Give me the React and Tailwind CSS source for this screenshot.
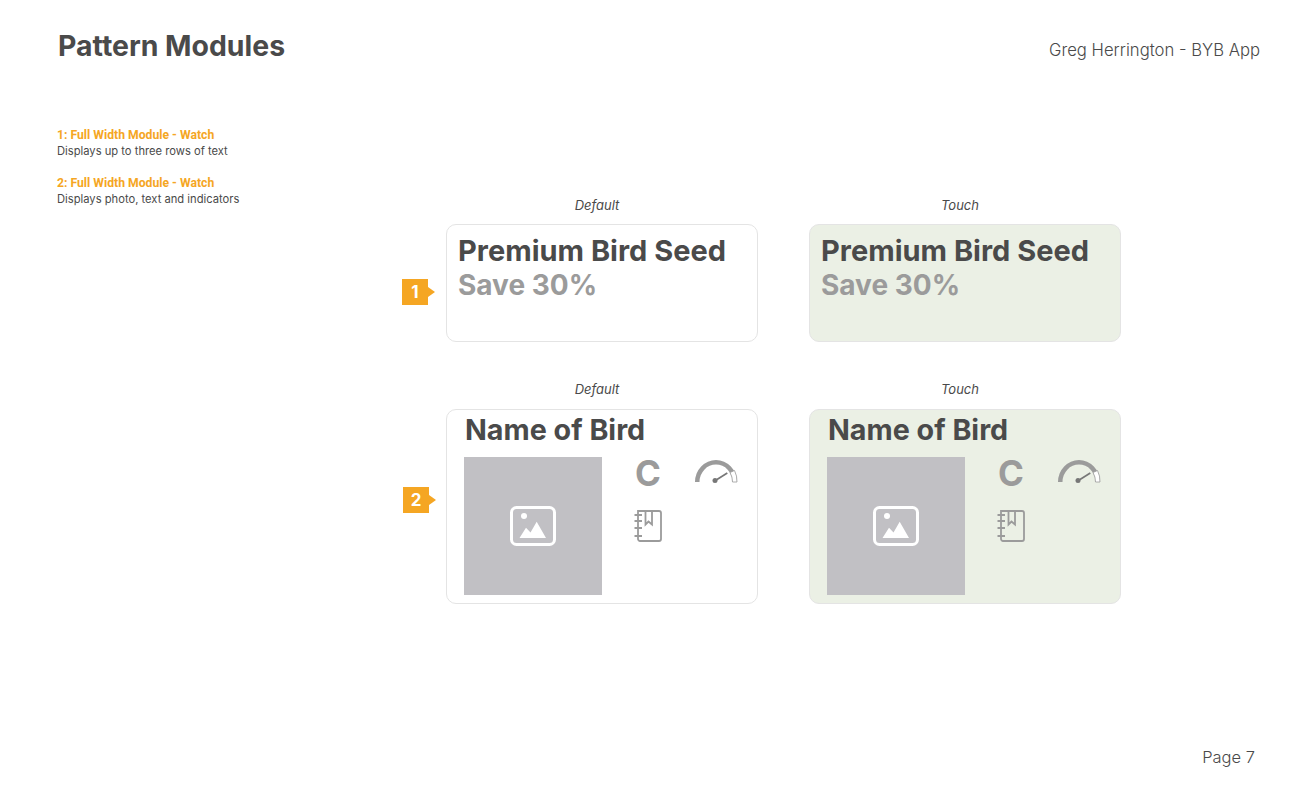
import React from 'react';

const Gauge = () => (
  <svg width="44" height="24" viewBox="0 0 44 24" fill="none">
    <path d="M1 23A21 22 0 0 1 43 23H38.500A16.500 17.500 0 0 0 5.500 23Z" fill="#9b9b9b" />
    <path d="M36 13.500L40.500 11.500A21 22 0 0 1 43 23H38.500A16.500 17.500 0 0 0 36 13.500Z" fill="#fff" stroke="#9b9b9b" strokeWidth="0.8" />
    <path d="M21 21.700L33.300 14" stroke="#777" strokeWidth="1.700" />
    <circle cx="21" cy="21.500" r="2.500" fill="#777" />
  </svg>
);

const Notebook = () => (
  <svg width="28" height="32" viewBox="0 0 28 32" fill="none" stroke="#9b9b9b" strokeWidth="1.800">
    <path d="M4 1H25C26 1 27 2 27 3V29C27 30 26 31 25 31H6C5 31 4 30 4 29Z" />
    <path d="M11.500 1V14.500L14.500 11.500L18 14.500V1" />
    <path d="M0.500 5H8M0.500 11H8M0.500 18H8M0.500 26H8" />
  </svg>
);

const PhotoIcon = () => (
  <svg width="46" height="40" viewBox="0 0 46 40" fill="none">
    <rect x="1.500" y="1.500" width="43" height="37" rx="5" stroke="#fff" strokeWidth="3" />
    <circle cx="14" cy="10" r="3" fill="#fff" />
    <path d="M9.500 32L16 21.700L20.500 26.500L26.700 15.700L36 32Z" fill="#fff" />
  </svg>
);

const Marker = ({ n }) => (
  <div className="flex items-center">
    <span className="flex h-[26px] w-[26px] items-center justify-center bg-[#f5a623] text-[17px] font-bold leading-none text-white">{n}</span>
    <span className="h-0 w-0 border-y-[5px] border-l-[7px] border-y-transparent border-l-[#f5a623]" />
  </div>
);

const TextCard = ({ bg }) => (
  <div className={`h-[118px] rounded-[10px] border border-[#e4e4e4] px-[11px] pt-[9px] ${bg}`}>
    <p className="text-[29px] font-bold leading-[34px] text-[#4a4a4a]">Premium Bird Seed</p>
    <p className="text-[28px] font-bold leading-[34px] text-[#9b9b9b]">Save 30%</p>
  </div>
);

const BirdCard = ({ bg }) => (
  <div className={`h-[195px] rounded-[10px] border border-[#e4e4e4] pl-[17px] pt-[2px] ${bg}`}>
    <p className="pl-px text-[28.700px] font-bold leading-[36px] text-[#4a4a4a]">Name of Bird</p>
    <div className="mt-[9px] flex">
      <div className="flex h-[138px] w-[138px] items-center justify-center bg-[#c1c0c4]">
        <PhotoIcon />
      </div>
      <div className="ml-[32px] grid grid-cols-[28px_44px] grid-rows-[32px_32px] gap-x-[32px] gap-y-[20px] pt-[1px]">
        <span className="text-center text-[35px] font-bold leading-[30px] text-[#9b9b9b]">C</span>
        <div className="pt-[1px]"><Gauge /></div>
        <Notebook />
      </div>
    </div>
  </div>
);

const Caption = ({ children, gap }) => (
  <p className={`pr-[10px] text-center text-[13px] italic leading-[16px] text-[#4a4a4a] ${gap}`}>{children}</p>
);

export default function App() {
  return (
    <div className="flex h-[792px] w-[1294px] flex-col bg-white font-['Inter',sans-serif] text-[#4a4a4a]">
      <header className="flex items-start justify-between pl-[58px] pr-[34px] pt-[28px]">
        <h1 className="text-[28.400px] font-bold leading-[36px]">Pattern Modules</h1>
        <span className="pt-[10px] text-[16.700px] font-light leading-[24px]">Greg Herrington - BYB App</span>
      </header>

      <main className="flex flex-1 pl-[57px] pt-[63px]">
        <div className="w-[345px] text-[11.200px] leading-[16px]">
          <p className="font-['Roboto',sans-serif] text-[12.200px] font-bold text-[#f5a623]">1: Full Width Module - Watch</p>
          <p>Displays up to three rows of text</p>
          <p className="mt-[16px] font-['Roboto',sans-serif] text-[12.200px] font-bold text-[#f5a623]">2: Full Width Module - Watch</p>
          <p>Displays photo, text and indicators</p>
        </div>

        <div className="flex flex-col gap-[39px] pt-[70px]">
          <section className="flex">
            <div className="flex w-[44px] items-center pt-[45px]"><Marker n="1" /></div>
            <div className="w-[312px]">
              <Caption gap="mb-[11px]">Default</Caption>
              <TextCard bg="bg-white" />
            </div>
            <div className="ml-[51px] w-[312px]">
              <Caption gap="mb-[11px]">Touch</Caption>
              <TextCard bg="bg-[#ebf0e5]" />
            </div>
          </section>

          <section className="flex">
            <div className="flex w-[44px] items-center pl-px pt-[15px]"><Marker n="2" /></div>
            <div className="w-[312px]">
              <Caption gap="mb-[12px]">Default</Caption>
              <BirdCard bg="bg-white" />
            </div>
            <div className="ml-[51px] w-[312px]">
              <Caption gap="mb-[12px]">Touch</Caption>
              <BirdCard bg="bg-[#ebf0e5]" />
            </div>
          </section>
        </div>
      </main>

      <footer className="pb-[24px] pr-[39px] text-right text-[16.500px] font-light leading-[22px]">Page 7</footer>
    </div>
  );
}
